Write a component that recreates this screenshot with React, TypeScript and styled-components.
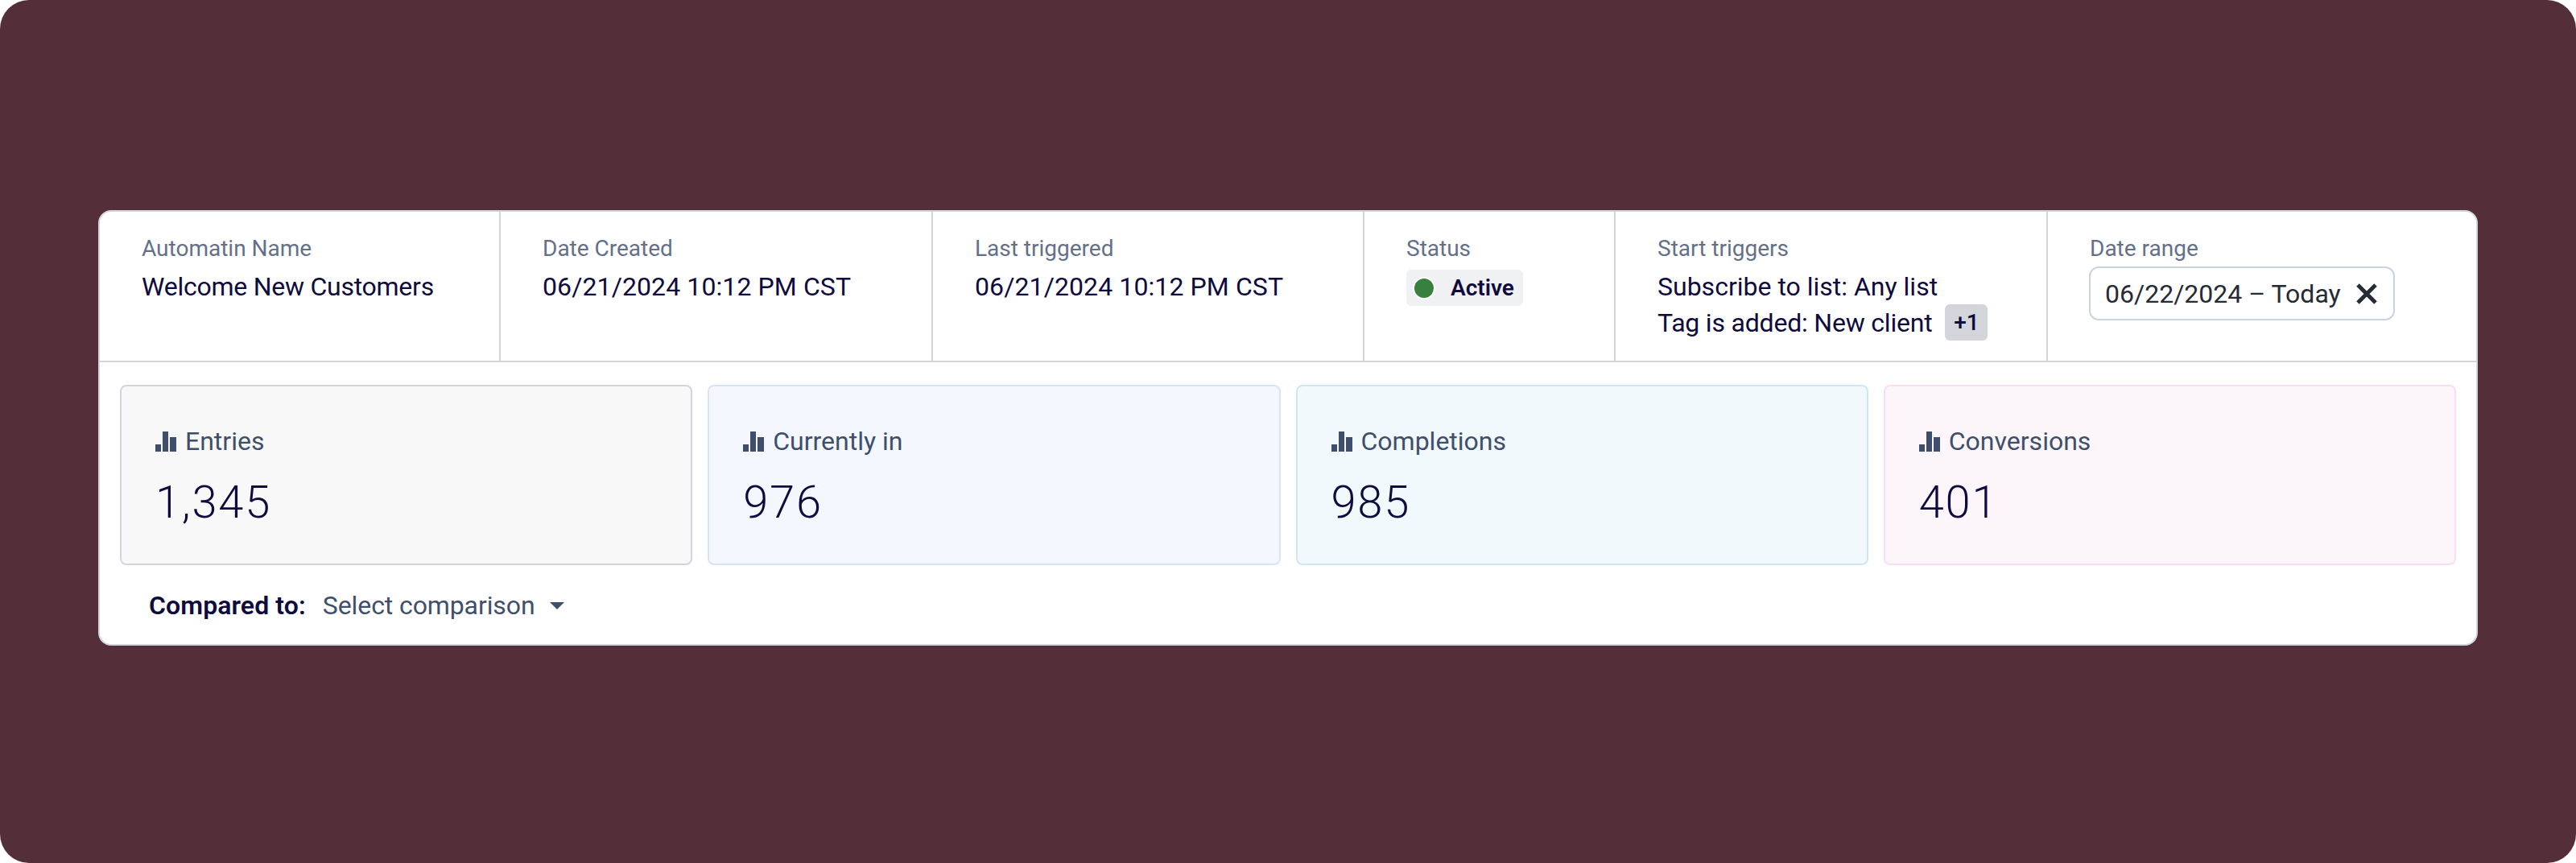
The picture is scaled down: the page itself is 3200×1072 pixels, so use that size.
import React from "react";
import styled, { createGlobalStyle } from "styled-components";

const GlobalStyle = createGlobalStyle`
    html, body {
        margin: 0;
        padding: 0;
        background: #ffffff;
    }
    * {
        box-sizing: border-box;
    }
`;

const stats = [
    { label: "Entries", value: "1,345", bg: "#f8f8f9", line: "#d2d5da" },
    { label: "Currently in", value: "976", bg: "#f4f7fe", line: "#d8e3fb" },
    { label: "Completions", value: "985", bg: "#f1f9fc", line: "#cfe7ee" },
    { label: "Conversions", value: "401", bg: "#fcf6fb", line: "#fbdcf4" },
];

function BarsIcon() {
    return (
        <svg width="26" height="25" viewBox="0 0 26 25" fill="#3f4f6b">
            <rect x="0" y="16" width="7" height="9" />
            <rect x="9" y="0" width="7" height="25" />
            <rect x="18" y="7" width="8" height="18" />
        </svg>
    );
}

export default function App() {
    return (
        <Page>
            <GlobalStyle />
            <Card>
                <Header>
                    <Cell>
                        <Label>Automatin Name</Label>
                        <Value $spacing="-0.25px">Welcome New Customers</Value>
                    </Cell>
                    <Cell>
                        <Label>Date Created</Label>
                        <Value $spacing="0.1px">06/21/2024 10:12 PM CST</Value>
                    </Cell>
                    <Cell>
                        <Label>Last triggered</Label>
                        <Value $spacing="0.1px">06/21/2024 10:12 PM CST</Value>
                    </Cell>
                    <Cell>
                        <Label>Status</Label>
                        <StatusBadge>
                            <Dot />
                            Active
                        </StatusBadge>
                    </Cell>
                    <Cell>
                        <Label>Start triggers</Label>
                        <Value>Subscribe to list: Any list</Value>
                        <Value $spacing="-0.2px">
                            Tag is added: New client
                            <MoreBadge>+1</MoreBadge>
                        </Value>
                    </Cell>
                    <Cell>
                        <Label>Date range</Label>
                        <DateField>
                            06/22/2024 – Today
                            <svg width="26" height="26" viewBox="0 0 26 26" fill="none" stroke="#262b35" strokeWidth="5">
                                <path d="M2 2 L24 24 M24 2 L2 24" />
                            </svg>
                        </DateField>
                    </Cell>
                </Header>
                <Stats>
                    {stats.map((s) => (
                        <Stat key={s.label} $bg={s.bg} $line={s.line}>
                            <StatLabel>
                                <BarsIcon />
                                {s.label}
                            </StatLabel>
                            <StatValue>{s.value}</StatValue>
                        </Stat>
                    ))}
                </Stats>
                <Compare>
                    <strong>Compared to:</strong>
                    <span>Select comparison</span>
                    <Caret />
                </Compare>
            </Card>
        </Page>
    );
}

const Page = styled.div`
    width: 3200px;
    height: 1072px;
    padding: 261px 122px 0;
    background: #542f39;
    border-radius: 36px;
    font-family: "Roboto", "Liberation Sans", sans-serif;
    color: #0f0b3e;
    overflow: hidden;
`;

const Card = styled.div`
    height: 541px;
    background: #ffffff;
    border: 2px solid #d2d5da;
    border-radius: 16px;
`;

const Header = styled.div`
    display: grid;
    grid-template-columns: 498px 537px 536px 312px 537px 1fr;
    height: 187px;
    border-bottom: 2px solid #d2d5da;
`;

const Cell = styled.div`
    padding: 28px 24px 0 52px;
    border-right: 2px solid #d2d5da;

    &:last-child {
        border-right: none;
    }
`;

const Label = styled.div`
    font-size: 28px;
    line-height: 36px;
    color: #64708a;
`;

const Value = styled.div<{ $spacing?: string }>`
    display: flex;
    align-items: center;
    height: 45px;
    font-size: 32px;
    letter-spacing: ${(p) => p.$spacing || "normal"};
    white-space: nowrap;

    ${Label} + & {
        margin-top: 6px;
    }
`;

const StatusBadge = styled.div`
    display: inline-flex;
    align-items: center;
    height: 45px;
    margin-top: 8px;
    padding: 0 11px 0 10px;
    gap: 21px;
    background: #f0f1f3;
    border-radius: 6px;
    font-size: 28px;
    font-weight: 600;
`;

const Dot = styled.span`
    width: 24px;
    height: 24px;
    border-radius: 50%;
    background: #37803e;
    box-shadow: 0 0 0 2px #ffffff;
`;

const MoreBadge = styled.span`
    display: inline-flex;
    align-items: center;
    justify-content: center;
    width: 53px;
    height: 45px;
    margin-left: 16px;
    background: #d2d5da;
    border-radius: 6px;
    font-size: 28px;
    font-weight: 500;
    letter-spacing: normal;
`;

const DateField = styled.div`
    display: flex;
    align-items: center;
    justify-content: space-between;
    width: 380px;
    height: 67px;
    margin: 4px 0 0 -1px;
    padding: 0 20px 0 18px;
    border: 2px solid #cbd2e0;
    border-radius: 12px;
    font-size: 32px;
    color: #262b35;
    white-space: nowrap;
`;

const Stats = styled.div`
    display: grid;
    grid-template-columns: repeat(4, 1fr);
    gap: 19px;
    padding: 28px 25px 0;
`;

const Stat = styled.div<{ $bg: string; $line: string }>`
    height: 224px;
    padding: 50px 42px 0;
    background: ${(p) => p.$bg};
    border: 2px solid ${(p) => p.$line};
    border-radius: 8px;
`;

const StatLabel = styled.div`
    display: flex;
    align-items: center;
    gap: 11px;
    height: 36px;
    font-size: 32px;
    color: #3f4f6b;
`;

const StatValue = styled.div`
    margin-top: 22px;
    font-size: 56px;
    line-height: 72px;
    font-weight: 300;
    letter-spacing: 1.8px;
`;

const Compare = styled.div`
    display: flex;
    align-items: center;
    height: 44px;
    margin-top: 28px;
    padding-left: 61px;
    font-size: 32px;

    strong {
        font-weight: 600;
        letter-spacing: 0.1px;
    }

    span {
        margin-left: 21px;
        color: #3f4f6b;
        letter-spacing: -0.1px;
    }
`;

const Caret = styled.i`
    width: 0;
    height: 0;
    margin-left: 18px;
    border-left: 9px solid transparent;
    border-right: 9px solid transparent;
    border-top: 9px solid #3f4f6b;
`;
